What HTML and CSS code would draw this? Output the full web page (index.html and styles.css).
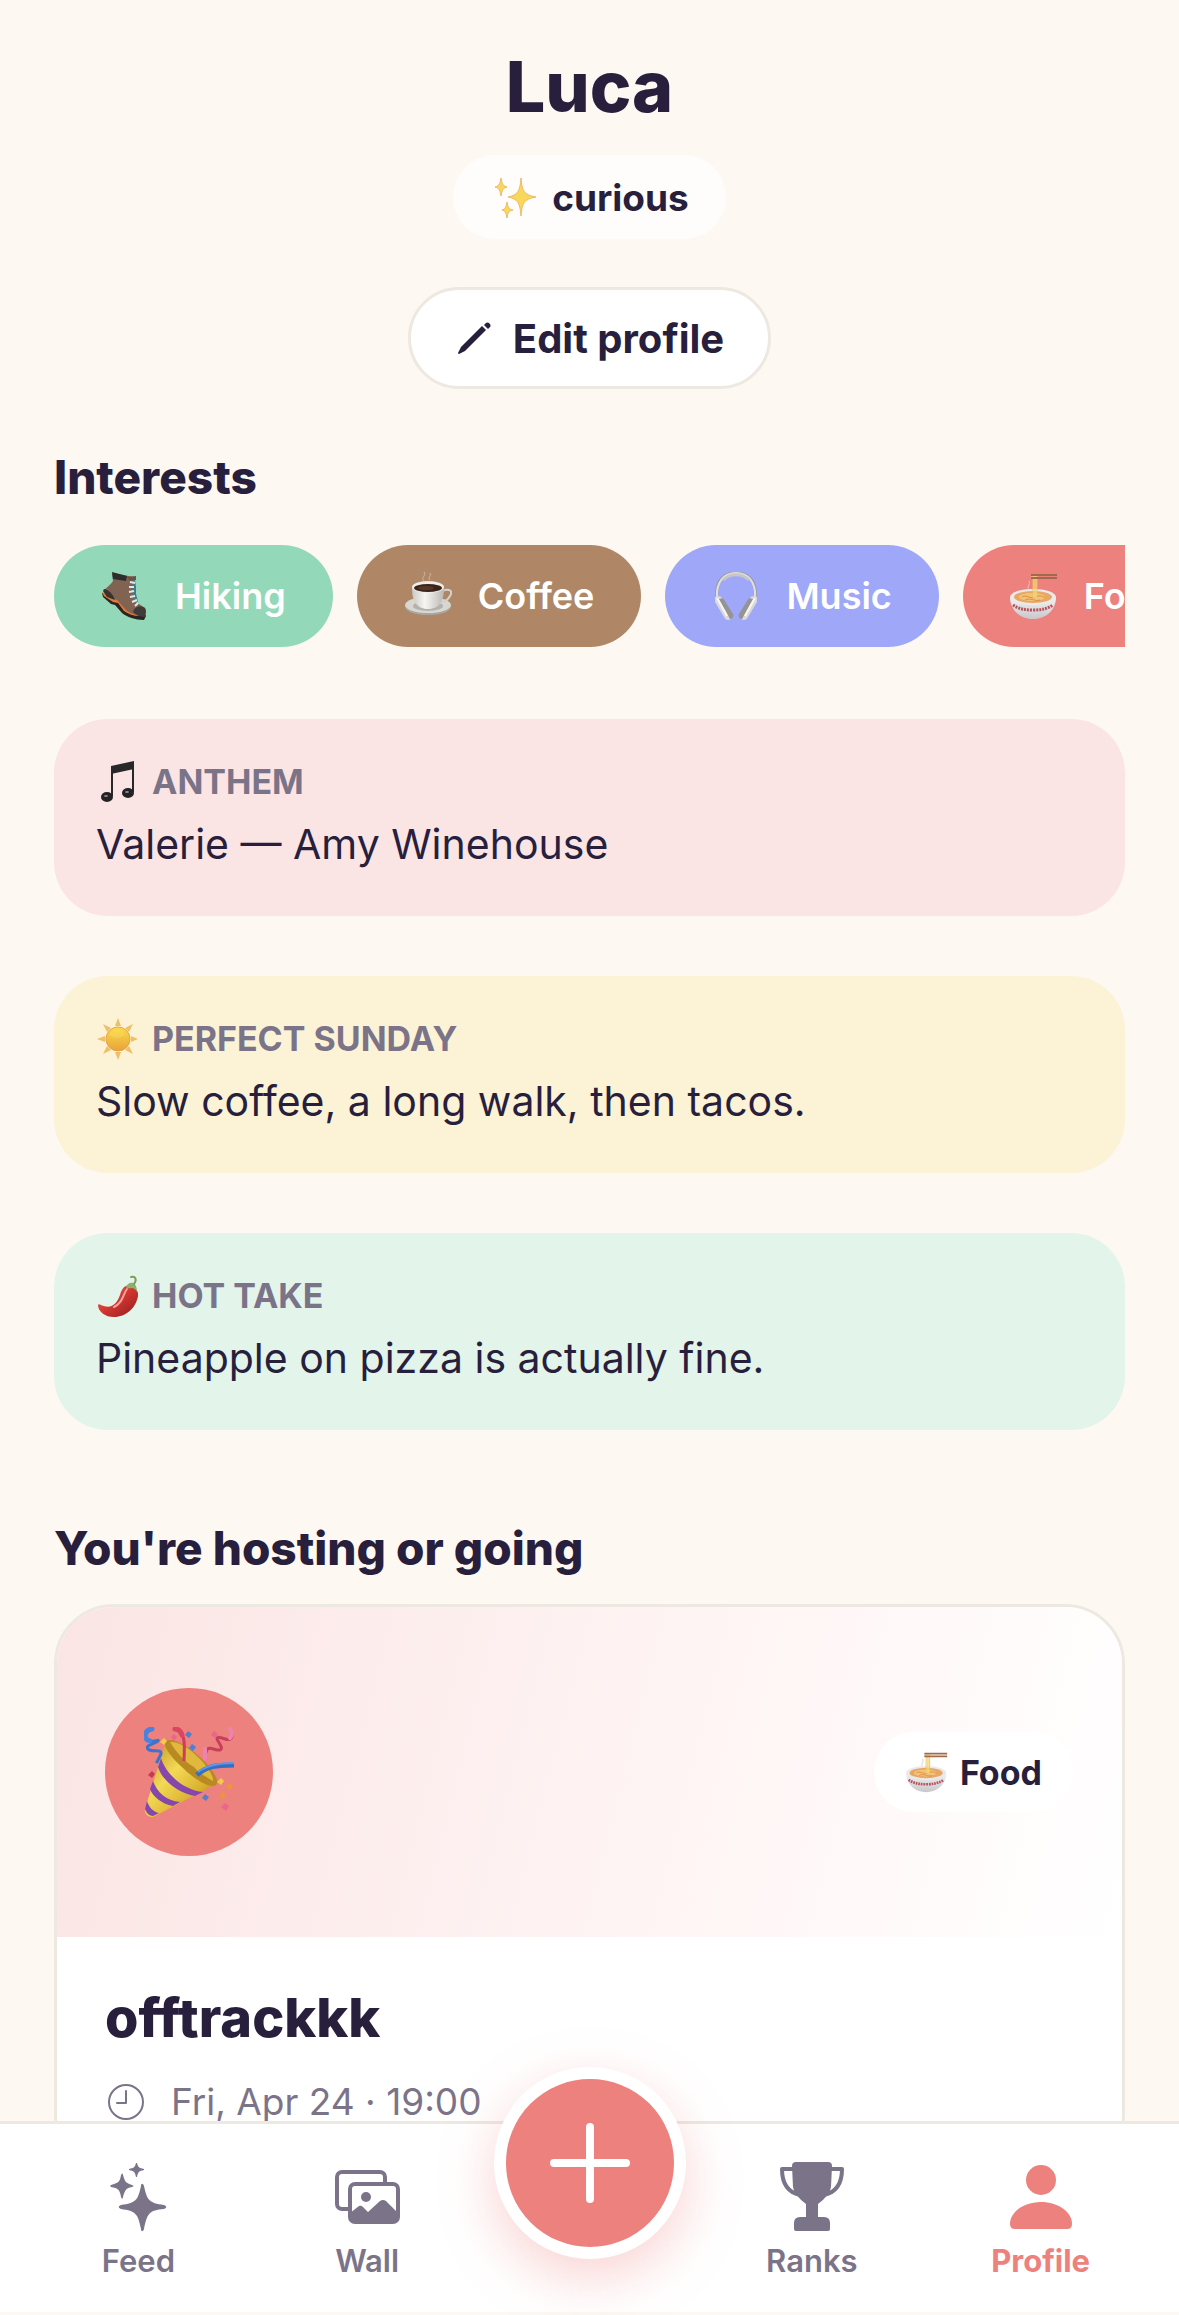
FILE: index.html
```html
<!DOCTYPE html>
<html lang="en">
<head>
  <meta charset="UTF-8" />
  <meta name="viewport" content="width=device-width, initial-scale=1.0"/>
  <title>Profile</title>
  <link rel="stylesheet" href="styles.css">
</head>
<body>

  <!-- shared drawings -->
  <svg class="defs" aria-hidden="true">
    <defs>
      <linearGradient id="gold" x1="0" y1="0" x2="1" y2="1">
        <stop offset="0" stop-color="#b98a1e"/>
        <stop offset="0.4" stop-color="#f3d955"/>
        <stop offset="0.7" stop-color="#d9b02e"/>
        <stop offset="1" stop-color="#8f7418"/>
      </linearGradient>
      <linearGradient id="bowl" x1="0" y1="0" x2="0" y2="1">
        <stop offset="0" stop-color="#f4f3f3"/>
        <stop offset="1" stop-color="#c9c7cb"/>
      </linearGradient>
      <linearGradient id="cup" x1="0" y1="0" x2="1" y2="0">
        <stop offset="0" stop-color="#c9c8c4"/>
        <stop offset="0.4" stop-color="#f7f6f3"/>
        <stop offset="1" stop-color="#b9b7b3"/>
      </linearGradient>
      <linearGradient id="sunFill" x1="0" y1="0" x2="0" y2="1">
        <stop offset="0" stop-color="#fbdc4c"/>
        <stop offset="1" stop-color="#e9a23a"/>
      </linearGradient>
      <linearGradient id="chili" x1="0" y1="0" x2="1" y2="1">
        <stop offset="0" stop-color="#ee6a5c"/>
        <stop offset="0.5" stop-color="#cf3530"/>
        <stop offset="1" stop-color="#8e1d1e"/>
      </linearGradient>
      <symbol id="noodles" viewBox="0 0 48 48">
        <path d="M21 6l2-3M19 18c-3-4 2-5 0-9" fill="none" stroke="#d8cfc8" stroke-width="1"/>
        <path d="M0 25c0 12 9 22 23 22s23-10 23-22z" fill="url(#bowl)"/>
        <ellipse cx="23" cy="25" rx="23" ry="8" fill="#ebe9e9"/>
        <ellipse cx="23" cy="25" rx="19" ry="6" fill="#e8a765"/>
        <ellipse cx="22" cy="25" rx="13" ry="4" fill="#f3c377"/>
        <path d="M12 25c5-3 9 3 14 0s7 1 9 0M15 28c5-3 10 2 15 0" fill="none" stroke="#d98f45" stroke-width="1"/>
        <path d="M3 33c6 4 12 5 20 5s14-1 20-5" fill="none" stroke="#b5525c" stroke-width="3" stroke-dasharray="2 1"/>
        <path d="M23 4v22M25 4v22M27 4v21" fill="none" stroke="#e9c04f" stroke-width="1"/>
        <path d="M24 4v22M26 4v22" fill="none" stroke="#f7e08a" stroke-width="1"/>
        <path d="M21 3h26M21 6h26" stroke="#a26a4a" stroke-width="2"/>
      </symbol>
    </defs>
  </svg>

  <div class="app">
    <main class="content">

      <header class="profile">
        <h1>Luca</h1>
        <div class="mood">
          <svg class="icon-md" viewBox="0 0 48 48" aria-hidden="true">
            <g fill="#f9d75a" stroke="#ecb96a" stroke-width="1" stroke-linejoin="round">
              <path d="M31 5c1 13 3 17 15 19-12 2-14 6-15 19-1-13-3-17-13-19 10-2 12-6 13-19z"/>
              <path d="M11 5c1 6 2 8 6 9-4 1-5 3-6 9-1-6-2-8-6-9 4-1 5-3 6-9z"/>
              <path d="M17 29c1 6 2 7 6 8-4 1-5 2-6 8-1-6-2-7-5-8 3-1 4-2 5-8z"/>
            </g>
          </svg>
          curious
        </div>
        <button class="edit-btn" type="button">
          <svg viewBox="0 0 36 36" aria-hidden="true">
            <path d="M27 6l4 4L10 31l-6 3c-1 0-1-1-1-1l3-6z" fill="currentColor"/>
            <path d="M29 5l2-2c2-2 6 2 4 4l-2 2z" fill="currentColor"/>
          </svg>
          Edit profile
        </button>
      </header>

      <h2>Interests</h2>
      <ul class="interests">
        <li class="chip mint">
          <svg class="icon-md" viewBox="0 0 48 48" aria-hidden="true">
            <path d="M1 21l1 4 8 7 4 1 7 8c5 4 13 7 22 7l2-4-3-6-16-8z" fill="#2a2422"/>
            <path d="M1 20l2 4 9 6 5 1 6 8c4 3 10 5 15 5l-6-8-16-10z" fill="#df7a3a"/>
            <path d="M11 1l1 8c-3 5-7 6-9 10l3 5 10 4 8 9c4 4 11 7 19 7l2-6-1-2-9-6-2-10 0-15z" fill="#806353"/>
            <path d="M3 17c4 0 9 5 11 11l-8-3-4-6z" fill="#38312f"/>
            <path d="M11 0l15 4-1 5-13-2z" fill="#2c2d2e"/>
            <path d="M26 5l9-1v4l-6 1z" fill="#6d5142"/>
            <path d="M32 40c1-5 7-8 12-4l1 4-1 5c-5 0-9-2-12-5z" fill="#403a38"/>
            <path d="M33 8l1 7 0 7 2 8" fill="none" stroke="#357e96" stroke-width="2"/>
            <path d="M29 10l5 1M28 15l5 0M28 20l5-1M29 25l5-1M31 30l5-2M34 34l3-3" stroke="#d7ecf0" stroke-width="2"/>
          </svg>
          Hiking
        </li>
        <li class="chip brown">
          <svg class="icon-md" viewBox="0 0 48 48" aria-hidden="true">
            <path d="M20 9c-4-4 3-5 0-9M26 8c-3-3 2-4 0-7" fill="none" stroke="#cdb9a8" stroke-width="1"/>
            <ellipse cx="24" cy="35" rx="23" ry="8" fill="#a9a6a1"/>
            <ellipse cx="24" cy="33" rx="23" ry="8" fill="#d9d7d2"/>
            <ellipse cx="24" cy="34" rx="15" ry="5" fill="#b5b2ac"/>
            <path d="M38 19c8-3 11 0 8 5-2 4-6 6-10 7" fill="none" stroke="#d4d2cf" stroke-width="2"/>
            <path d="M8 16c0 12 4 21 16 21s16-9 16-21z" fill="url(#cup)"/>
            <ellipse cx="24" cy="15" rx="16" ry="6" fill="#efede9"/>
            <ellipse cx="24" cy="16" rx="14" ry="4" fill="#3d2419"/>
            <ellipse cx="22" cy="16" rx="8" ry="2" fill="#54372a"/>
          </svg>
          Coffee
        </li>
        <li class="chip violet">
          <svg class="icon-md" viewBox="0 0 48 48" aria-hidden="true">
            <path d="M5 26C3 10 11 1 24 1s21 9 19 25" fill="none" stroke="#9b9a9c" stroke-width="3"/>
            <path d="M5 25C4 10 12 1 24 1s20 9 19 24" fill="none" stroke="#e1e1e2" stroke-width="2"/>
            <path d="M11 8c7-7 19-7 26 0" fill="none" stroke="#c7c7c9" stroke-width="3"/>
            <path d="M3 25c3-2 6-1 8 2l9 15c1 3-1 6-4 6-2 0-3-1-4-3L3 30z" fill="#d9d9db"/>
            <path d="M11 26l10 16c1 3-1 5-3 5L7 27z" fill="#969392"/>
            <path d="M5 26l10 18" stroke="#f6f6f6" stroke-width="2"/>
            <path d="M45 25c-3-2-6-1-8 2l-9 15c-1 3 1 6 4 6 2 0 3-1 4-3l9-15z" fill="#d9d9db"/>
            <path d="M37 26L27 42c-1 3 1 5 3 5l11-20z" fill="#969392"/>
            <path d="M43 26L33 44" stroke="#f6f6f6" stroke-width="2"/>
          </svg>
          Music
        </li>
        <li class="chip coral">
          <svg class="icon-md" aria-hidden="true"><use href="#noodles"/></svg>
          Food
        </li>
      </ul>

      <div class="prompts">
        <section class="prompt pink">
          <h3>
            <svg class="icon-sm" viewBox="0 0 42 42" aria-hidden="true">
              <path d="M15 5l23-5v8L15 13z" fill="#29272a"/>
              <path d="M16 6v29M37 3v28" stroke="#29272a" stroke-width="2"/>
              <ellipse cx="11" cy="36" rx="6" ry="5" fill="#242225"/>
              <ellipse cx="32" cy="32" rx="6" ry="5" fill="#242225"/>
              <ellipse cx="10" cy="35" rx="2" ry="1" fill="#8d8b8f"/>
              <ellipse cx="31" cy="31" rx="2" ry="1" fill="#8d8b8f"/>
            </svg>
            ANTHEM
          </h3>
          <p>Valerie — Amy Winehouse</p>
        </section>

        <section class="prompt yellow">
          <h3>
            <svg class="icon-sm" viewBox="0 0 42 42" aria-hidden="true">
              <g fill="#efbf68">
                <path d="M22 0l3 8h-6zM22 42l-3-8h6zM1 21l8-3v6zM42 21l-7 3v-6z"/>
                <path d="M7 6l8 4-4 4zM37 6l-4 8-4-4zM7 36l4-8 4 4zM37 36l-8-4 4-4z"/>
              </g>
              <circle cx="22" cy="21" r="12" fill="url(#sunFill)" stroke="#e5a441"/>
              <ellipse cx="21" cy="16" rx="7" ry="4" fill="#fbe56b" opacity="0.3"/>
            </svg>
            PERFECT SUNDAY
          </h3>
          <p>Slow coffee, a long walk, then tacos.</p>
        </section>

        <section class="prompt green">
          <h3>
            <svg class="icon-sm" viewBox="0 0 42 42" aria-hidden="true">
              <path d="M30 11c6-3 13 3 12 10-2 12-12 21-24 21C9 42 3 37 2 31c0-2 1-2 3-1 11 5 16-2 19-10 1-4 3-8 6-9z" fill="url(#chili)"/>
              <path d="M31 14c-4 5-4 14-13 18" fill="none" stroke="#f6a49a" stroke-width="2" stroke-linecap="round"/>
              <path d="M30 12c1-3 4-5 7-4 3 1 4 5 4 9-2-3-3-4-5-4s-4 1-6-1z" fill="#8fb06a"/>
              <path d="M38 9c3-4 2-8-3-7" fill="none" stroke="#7d9c5c" stroke-width="2" stroke-linecap="round"/>
            </svg>
            HOT TAKE
          </h3>
          <p>Pineapple on pizza is actually fine.</p>
        </section>
      </div>

      <h2>You're hosting or going</h2>
      <article class="event">
        <div class="event-banner">
          <div class="event-emoji">
            <svg viewBox="0 0 90 90" aria-hidden="true">
              <path d="M22 14C38 12 76 44 72 57L9 90c-4 1-9-3-8-8z" fill="url(#gold)"/>
              <path d="M22 14c5-4 22 4 35 17 12 11 19 23 15 27-5 4-21-5-33-17C26 29 17 17 22 14z" fill="#b98a22"/>
              <path d="M26 15c7-1 19 5 30 17 9 9 14 19 13 22-8-5-13-7-19-14-9-5-18-15-24-25z" fill="#e0b83e"/>
              <path d="M17 31c5 16 22 32 42 34l-8 4C34 66 18 53 14 40z" fill="#8546ae"/>
              <path d="M9 54c4 11 13 20 27 21l-7 4C18 77 9 70 6 62z" fill="#8546ae"/>
              <path d="M3 74c2 6 6 11 12 12l-6 3c-4 0-7-4-8-7z" fill="#8546ae"/>
              <path d="M8 2C0 3-1 13 6 14s9-2 8 0C10 17 1 18 4 22s14-1 13 5l-4 8" fill="none" stroke="#3f72c9" stroke-width="3" stroke-linecap="round"/>
              <path d="M8 2C0 3-1 13 6 14" fill="none" stroke="#4a83df" stroke-width="5" stroke-linecap="round"/>
              <path d="M31 2c10 3 10 12 9 32" fill="none" stroke="#cf3d56" stroke-width="3"/>
              <path d="M31 2c4 0 6 3 7 6" fill="none" stroke="#dc4560" stroke-width="5" stroke-linecap="round"/>
              <path d="M86 2c5 8 1 12-5 10s-10-3-7 2 6 9 0 9-12-8-13 9" fill="none" stroke="#c93e5c" stroke-width="3" stroke-linecap="round"/>
              <path d="M86 2c3 4 2 7 0 9M61 22v10" fill="none" stroke="#ee83ad" stroke-width="4" stroke-linecap="round"/>
              <path d="M53 48c9-9 20-10 37-10" fill="none" stroke="#356fc4" stroke-width="5"/>
              <path d="M54 45c9-7 20-9 36-9" fill="none" stroke="#6196e5" stroke-width="2"/>
              <g fill="#4d7fd6"><path d="M44 4l4 3-3 4-4-3zM48 17l4 3-3 4-4-3zM61 67l4 3-3 4-4-3z"/></g>
              <g fill="#ea668b"><path d="M30 7l3 3-3 4-3-4zM70 4l4 3-3 4-4-3zM81 76l4 3-3 5-5-4z"/></g>
              <path d="M8 44l3 3-3 4-4-3z" fill="#c63a4f"/>
              <g fill="#f4ca4d"><path d="M20 11l3 3-3 4-4-3zM77 51l3 3-3 4-4-3z"/></g>
              <g fill="#ec963c"><path d="M86 56l3 3-3 4-4-3zM79 65l3 3-3 4-4-3z"/></g>
            </svg>
          </div>
          <span class="tag">
            <svg class="icon-sm" aria-hidden="true"><use href="#noodles"/></svg>
            Food
          </span>
        </div>
        <div class="event-body">
          <h3>offtrackkk</h3>
          <p class="event-time">
            <svg viewBox="0 0 36 36" fill="none" stroke="currentColor" stroke-width="2" stroke-linecap="round" aria-hidden="true">
              <circle cx="18" cy="18" r="17"/>
              <path d="M18 7v12H9" stroke-linejoin="round"/>
            </svg>
            Fri, Apr 24 · 19:00
          </p>
        </div>
      </article>

    </main>

    <nav class="tabbar">
      <a class="tab" href="#feed">
        <svg viewBox="0 0 72 72" fill="currentColor" aria-hidden="true">
          <path d="M39 26c0-3 2-3 3 0 3 14 5 17 20 19 3 1 3 3 0 4-15 1-17 5-20 20-1 3-3 3-3 0-3-15-5-18-20-20-3-1-3-3 0-4 15-2 17-5 20-19z"/>
          <path d="M19 15c1-2 2-2 2 0 2 7 3 8 9 10 2 1 2 1 0 2-6 1-7 3-9 10 0 2-1 2-2 0-1-7-3-9-10-10-1-1-1-1 0-2 7-2 9-3 10-10z"/>
          <path d="M34 3h1c1 4 2 5 7 6v1c-5 1-6 2-7 7h-1c-1-5-2-6-7-7V9c5-1 6-2 7-6z"/>
        </svg>
        Feed
      </a>
      <a class="tab" href="#wall">
        <svg viewBox="0 0 72 72" fill="none" stroke="currentColor" stroke-width="4" aria-hidden="true">
          <path d="M18 49h-7a5 5 0 0 1-5-5V17a5 5 0 0 1 5-5h38a5 5 0 0 1 5 5v7"/>
          <rect x="19" y="24" width="48" height="38" rx="5"/>
          <circle cx="35" cy="37" r="5" fill="currentColor" stroke="none"/>
          <path d="M19 53l9-7q2-1 4 1l5 5 12-11q3-2 6 0l12 12v4a5 5 0 0 1-5 5H24a5 5 0 0 1-5-5z" fill="currentColor" stroke="none"/>
        </svg>
        Wall
      </a>
      <div class="fab-slot">
        <button class="fab" type="button" aria-label="Add">
          <svg viewBox="0 0 80 80" fill="none" stroke="currentColor" stroke-width="8" stroke-linecap="round" aria-hidden="true">
            <path d="M40 4v72M4 40h72"/>
          </svg>
        </button>
      </div>
      <a class="tab" href="#ranks">
        <svg viewBox="0 0 72 72" aria-hidden="true">
          <path d="M20 2h32q4 0 4 4l-1 21q-1 8-13 17v13h6q6 0 6 6v6q0 2-2 2H20q-2 0-2-2v-6q0-6 6-6h6V44Q18 35 17 27L16 6q0-4 4-4z" fill="currentColor"/>
          <path d="M17 9H6q0 22 18 26M55 9h11q0 22-18 26" fill="none" stroke="currentColor" stroke-width="4" stroke-linejoin="round"/>
        </svg>
        Ranks
      </a>
      <a class="tab active" href="#profile" aria-current="page">
        <svg viewBox="0 0 72 72" fill="currentColor" aria-hidden="true">
          <ellipse cx="36" cy="20" rx="15" ry="15"/>
          <path d="M5 64c0-12 14-22 31-22s31 10 31 22q0 5-5 5H10q-5 0-5-5z"/>
        </svg>
        Profile
      </a>
    </nav>
  </div>

</body>
</html>
```
FILE: styles.css
```css
* {
  box-sizing: border-box;
}

body {
  margin: 0;
  font-family: Inter, "Liberation Sans", sans-serif;
  background-color: #fdf8f2;
  color: #281f3d;
}

h1, h2, h3, p, ul {
  margin: 0;
  padding: 0;
}

svg {
  display: block;
  flex: none;
}

.defs {
  position: absolute;
  width: 0;
  height: 0;
}

.app {
  display: flex;
  flex-direction: column;
  height: 100vh;
  padding-bottom: 3px;
}

.content {
  flex: 1;
  min-height: 0;
  overflow-y: auto;
  scrollbar-width: none;
  padding: 45px 54px 0;
}

.icon-md {
  width: 48px;
  height: 48px;
}

.icon-sm {
  width: 42px;
  height: 42px;
}

/* Header */
.profile {
  display: flex;
  flex-direction: column;
  align-items: center;
}

h1 {
  font-size: 70px;
  line-height: 84px;
  font-weight: 800;
}

.mood {
  display: flex;
  align-items: center;
  gap: 14px;
  height: 84px;
  margin-top: 26px;
  padding: 0 37px;
  border-radius: 42px;
  background-color: #fefdfc;
  font-size: 37px;
  font-weight: 700;
}

.edit-btn {
  display: flex;
  align-items: center;
  gap: 22px;
  height: 102px;
  margin-top: 48px;
  padding: 0 44px;
  border: 3px solid #ede8e0;
  border-radius: 51px;
  background-color: #fff;
  color: inherit;
  font-family: inherit;
  font-size: 40px;
  font-weight: 700;
  cursor: pointer;
}

.edit-btn svg {
  width: 36px;
  height: 36px;
}

h2 {
  font-size: 46px;
  line-height: 54px;
  font-weight: 800;
}

.content > h2 {
  margin-top: 61px;
}

/* Interests row, scrolls sideways */
.interests {
  display: flex;
  gap: 24px;
  margin-top: 41px;
  overflow-x: auto;
  scrollbar-width: none;
  list-style: none;
}

.chip {
  display: flex;
  flex: none;
  align-items: center;
  gap: 26px;
  height: 102px;
  padding: 0 47px;
  border-radius: 51px;
  color: #fff;
  font-size: 36px;
  font-weight: 600;
}

.mint { background-color: #93d8b9; }
.brown { background-color: #b08766; }
.violet { background-color: #9ea7f8; }
.coral { background-color: #ed817e; }

/* Prompt cards */
.prompts {
  display: flex;
  flex-direction: column;
  gap: 60px;
  margin-top: 72px;
}

.prompt {
  display: flex;
  flex-direction: column;
  gap: 11px;
  padding: 42px;
  border-radius: 54px;
}

.prompt h3 {
  display: flex;
  align-items: center;
  gap: 14px;
  color: #7b7489;
  font-size: 34px;
  line-height: 42px;
  font-weight: 700;
}

.prompt p {
  font-size: 41px;
  line-height: 60px;
}

.pink { background-color: #fae5e4; }
.yellow { background-color: #fcf2d5; }
.green { background-color: #e3f4eb; }

.content > .prompts + h2 {
  margin-top: 91px;
}

/* Event card */
.event {
  margin-top: 29px;
  overflow: hidden;
  border: 3px solid #ede8e0;
  border-radius: 60px;
  background-color: #fff;
}

.event-banner {
  display: flex;
  align-items: center;
  justify-content: space-between;
  height: 330px;
  padding: 0 48px;
  background: linear-gradient(104deg, #fae5e4, #fff5f5 60%, #fff);
}

.event-emoji {
  display: flex;
  align-items: center;
  justify-content: center;
  width: 168px;
  height: 168px;
  border-radius: 50%;
  background-color: #ed817e;
}

.event-emoji svg {
  width: 90px;
  height: 90px;
}

.tag {
  display: flex;
  align-items: center;
  gap: 12px;
  height: 80px;
  padding: 0 32px;
  border-radius: 40px;
  background-color: #fff;
  font-size: 34px;
  font-weight: 700;
}

.event-body {
  padding: 48px;
}

.event-body h3 {
  font-size: 54px;
  line-height: 66px;
  font-weight: 800;
}

.event-time {
  display: flex;
  align-items: center;
  gap: 27px;
  margin-top: 30px;
  padding-left: 3px;
  color: #7b7489;
  font-size: 37px;
  line-height: 42px;
}

.event-time svg {
  width: 36px;
  height: 36px;
}

/* Bottom tabs */
.tabbar {
  position: relative;
  z-index: 1;
  display: flex;
  padding: 36px 24px 33px;
  border-top: 3px solid #ede8e0;
  background-color: #fff;
}

.tab {
  display: flex;
  flex: 1;
  flex-direction: column;
  align-items: center;
  gap: 11px;
  color: #7b7489;
  font-size: 31px;
  line-height: 36px;
  font-weight: 600;
  text-decoration: none;
}

.tab svg {
  width: 72px;
  height: 72px;
}

.tab.active {
  color: #ed817e;
  font-weight: 700;
}

.fab-slot {
  display: flex;
  justify-content: center;
  width: 216px;
}

/* hangs over the top edge of the bar */
.fab {
  position: absolute;
  top: -57px;
  display: flex;
  align-items: center;
  justify-content: center;
  width: 192px;
  height: 192px;
  padding: 0;
  border: 12px solid #fff;
  border-radius: 50%;
  background-color: #ed817e;
  color: #fff;
  box-shadow: 0 18px 54px rgba(237, 129, 126, 0.35);
  cursor: pointer;
}

.fab svg {
  width: 80px;
  height: 80px;
}
```
